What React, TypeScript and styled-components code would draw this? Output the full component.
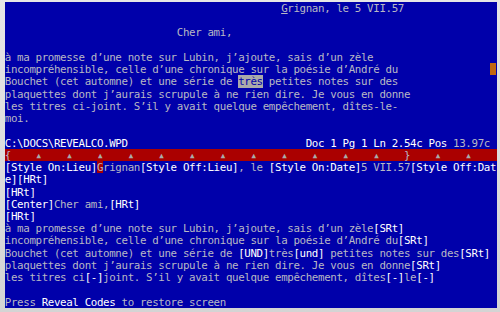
import React from "react";
import styled, { createGlobalStyle, css } from "styled-components";

type Tone = "n" | "b" | "cur" | "hl" | "ul" | "tab" | "scroll";
type CellData = { ch: string; tone: Tone };

const COLS = 80;
const ROWS = 25;

const GlobalStyle = createGlobalStyle`
  html, body {
    margin: 0;
    padding: 0;
    background: #dadada;
  }
  body {
    width: 500px;
    height: 312px;
    overflow: hidden;
  }
`;

const Frame = styled.div`
  width: 500px;
  height: 312px;
  box-sizing: border-box;
  padding: 2px 3px 4px 5px;
  background: linear-gradient(#e6e6e6, #d4d4d4);
`;

const Screen = styled.div`
  width: 492px;
  height: 306px;
  background: #0000aa;
  display: flex;
  flex-direction: column;
  font-family: "DejaVu Sans Mono", "Liberation Mono", monospace;
  font-size: 10.8px;
  font-weight: 500;
  color: #aaaaaa;
  overflow: hidden;
`;

const Row = styled.div<{ $ruler?: boolean }>`
  height: 12.24px;
  line-height: 13px;
  display: flex;
  flex: none;
  background: ${(p) => (p.$ruler ? "#aa0000" : "transparent")};
`;

const toneStyles: Record<Tone, ReturnType<typeof css>> = {
  n: css`
    color: #b8b8c4;
  `,
  b: css`
    color: #ffffff;
  `,
  cur: css`
    color: #b8b8c4;
    background: #aa0000;
  `,
  hl: css`
    color: #0000aa;
    background: #aaaaaa;
  `,
  ul: css`
    color: #b8b8c4;
    text-decoration: underline;
    text-underline-offset: 1px;
  `,
  tab: css`
    color: #aaaaaa;
    font-size: 7.5px;
  `,
  scroll: css`
    background: #c06810;
  `,
};

const Cell = styled.span<{ $tone: Tone }>`
  width: 6.15px;
  flex: none;
  display: flex;
  justify-content: center;
  white-space: pre;
  ${(p) => toneStyles[p.$tone]}
`;

function buildGrid(): CellData[][] {
  const grid: CellData[][] = Array.from({ length: ROWS }, () =>
    Array.from({ length: COLS }, () => ({ ch: " ", tone: "n" as Tone }))
  );
  const line = (r: number, col: number, segs: [Tone, string][]) => {
    let c = col;
    for (const [tone, text] of segs) {
      for (const ch of Array.from(text)) {
        if (c < COLS) grid[r][c] = { ch, tone };
        c++;
      }
    }
  };

  line(0, 45, [["ul", "G"], ["n", "rignan, le 5 VII.57"]]);
  line(2, 28, [["n", "Cher ami,"]]);
  line(4, 0, [["n", "à ma promesse d’une note sur Lubin, j’ajoute, sais d’un zèle"]]);
  line(5, 0, [["n", "incompréhensible, celle d’une chronique sur la poésie d’André du"]]);
  line(5, 79, [["scroll", " "]]);
  line(6, 0, [
    ["n", "Bouchet (cet automne) et une série de "],
    ["hl", "très"],
    ["n", " petites notes sur des"],
  ]);
  line(7, 0, [["n", "plaquettes dont j’aurais scrupule à ne rien dire. Je vous en donne"]]);
  line(8, 0, [["n", "les titres ci-joint. S’il y avait quelque empêchement, dîtes-le-"]]);
  line(9, 0, [["n", "moi."]]);

  line(11, 0, [["b", "C:\\DOCS\\REVEALCO.WPD"]]);
  line(11, 49, [["b", "Doc 1 Pg 1 Ln 2.54c Pos "], ["n", "13.97c"]]);

  line(12, 0, [["n", "{"]]);
  for (const c of [5, 10, 15, 20, 25, 30, 35, 40, 45, 50, 55, 60, 70, 75]) {
    line(12, c, [["tab", "▲"]]);
  }
  line(12, 65, [["n", "}"]]);

  line(13, 0, [
    ["b", "[Style On:Lieu]"],
    ["cur", "G"],
    ["n", "rignan"],
    ["b", "[Style Off:Lieu]"],
    ["n", ", le "],
    ["b", "[Style On:Date]"],
    ["n", "5 VII.57"],
    ["b", "[Style Off:Dat"],
  ]);
  line(14, 0, [["b", "e][HRt]"]]);
  line(15, 0, [["b", "[HRt]"]]);
  line(16, 0, [["b", "[Center]"], ["n", "Cher ami,"], ["b", "[HRt]"]]);
  line(17, 0, [["b", "[HRt]"]]);
  line(18, 0, [
    ["n", "à ma promesse d’une note sur Lubin, j’ajoute, sais d’un zèle"],
    ["b", "[SRt]"],
  ]);
  line(19, 0, [
    ["n", "incompréhensible, celle d’une chronique sur la poésie d’André du"],
    ["b", "[SRt]"],
  ]);
  line(20, 0, [
    ["n", "Bouchet (cet automne) et une série de "],
    ["b", "[UND]"],
    ["n", "très"],
    ["b", "[und]"],
    ["n", " petites notes sur des"],
    ["b", "[SRt]"],
  ]);
  line(21, 0, [
    ["n", "plaquettes dont j’aurais scrupule à ne rien dire. Je vous en donne"],
    ["b", "[SRt]"],
  ]);
  line(22, 0, [
    ["n", "les titres ci"],
    ["b", "[-]"],
    ["n", "joint. S’il y avait quelque empêchement, dîtes"],
    ["b", "[-]"],
    ["n", "le"],
    ["b", "[-]"],
  ]);
  line(24, 0, [["n", "Press "], ["b", "Reveal Codes"], ["n", " to restore screen"]]);
  return grid;
}

const GRID = buildGrid();

export default function App() {
  return (
    <>
      <GlobalStyle />
      <Frame>
        <Screen>
          {GRID.map((cells, r) => (
            <Row key={r} $ruler={r === 12}>
              {cells.map((cell, c) => (
                <Cell key={c} $tone={cell.tone}>
                  {cell.ch}
                </Cell>
              ))}
            </Row>
          ))}
        </Screen>
      </Frame>
    </>
  );
}
